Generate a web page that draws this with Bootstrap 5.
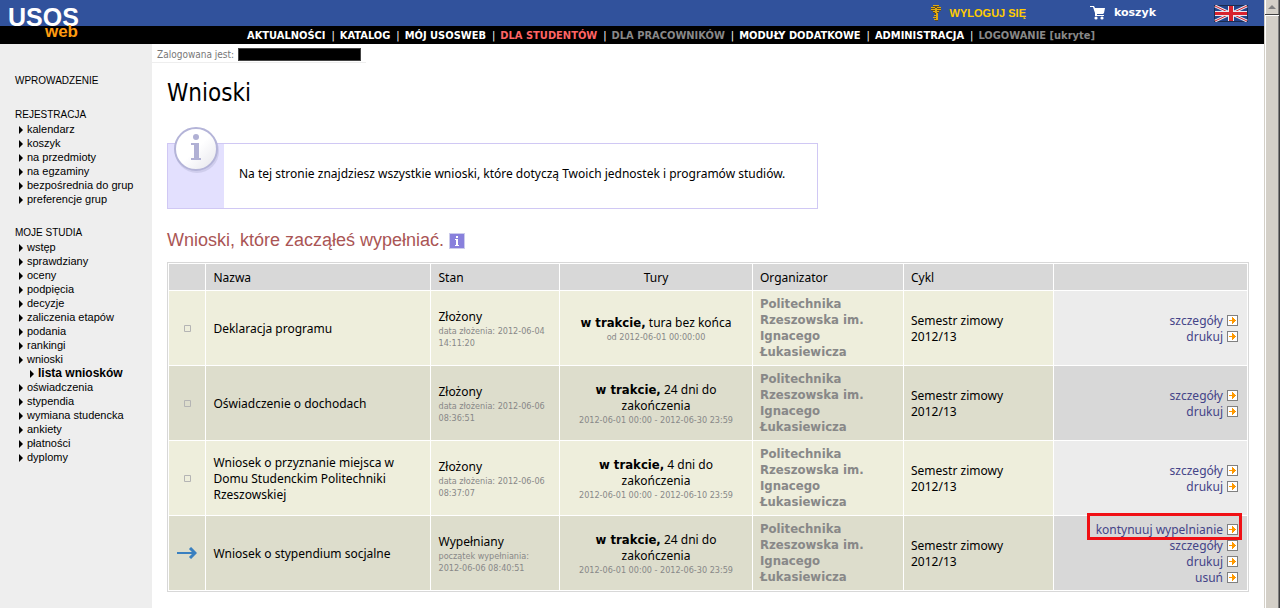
<!DOCTYPE html>
<html lang="pl">
<head>
<meta charset="utf-8">
<meta name="viewport" content="width=device-width, initial-scale=1">
<title>USOSweb - Wnioski</title>
<link href="https://cdn.jsdelivr.net/npm/bootstrap@5.3.0/dist/css/bootstrap.min.css" rel="stylesheet">
<style>
  :root { --tahoma: "DejaVu Sans Condensed", "DejaVu Sans", Tahoma, sans-serif; --text: "Noto Sans", Tahoma, sans-serif; --arial: "Liberation Sans", Arial, sans-serif; }
  body { font: 12px/16px var(--text); color: #000; background: #fff; }
  a { text-decoration: none; color: inherit; }
  a:hover { text-decoration: underline; }
  ul { list-style: none; margin: 0; padding: 0; }

  /* header */
  .bar-top { height: 26px; background: #31529c; padding-right: 16px; font: bold 11px/14px var(--arial); color: #fff; }
  .bar-nav { height: 18px; background: #000; padding-left: 247px; color: #888; font: bold 11px/20px var(--tahoma); white-space: nowrap; }
  .bar-nav li + li::before { content: "|"; color: #fff; font-weight: normal; margin: 0 5px 0 6px; }
  .bar-nav .on { color: #fff; }
  .bar-nav .current { color: #ff6464; }
  .logo { position: absolute; left: 8px; top: 8px; width: 70px; font-family: var(--arial); font-weight: bold; }
  .logo:hover { text-decoration: none; }
  .logo-usos { display: block; color: #fff; font-size: 25px; line-height: 18px; }
  .logo-web { display: block; color: #ff9c10; font-size: 17px; line-height: 12px; text-align: right; }
  .logout { color: #fc0; margin-right: 64px; }
  .basket { font-family: "DejaVu Sans", Verdana, sans-serif; margin-right: 58px; }

  /* side menu */
  .side { width: 152px; background: #eee; padding: 30px 0 0 15px; font: 11px/14px var(--arial); }
  .side h2 { font: 10px/14px var(--arial); margin: 0; }
  .side section { margin-bottom: 20px; }
  .side li { padding-left: 4px; }
  .side li li { padding-left: 11px; font-weight: bold; font-size: 12px; }
  .side li a::before { content: ""; display: inline-block; border: solid transparent; border-width: 4px 0 4px 4px; border-left-color: #000; margin-right: 4px; vertical-align: -1px; }

  /* content */
  .who { font: 10px/14px var(--tahoma); color: #777; padding: 4px 5px 0; width: 214px; border-bottom: 1px solid #eee; }
  .who-name { width: 123px; height: 13px; background: #000; border: 1px solid #444; }
  .inner { padding: 14px 15px 16px; }
  h1 { font: 24px/32px var(--tahoma); margin: 0 0 34px; }
  .note { width: 651px; max-width: 100%; height: 66px; border: 1px solid #d0c8f4; position: relative; margin-bottom: 17px; }
  .note-side { width: 56px; background: #e3e0fe; }
  .note-icon { position: absolute; left: 4px; top: -19px; }
  .note p { margin: 0; padding: 0 15px 5px; }
  .section-title { font: 18px/28px var(--arial); color: #a55; margin: 0 0 8px; }
  .section-title svg { vertical-align: -3px; }

  /* applications table */
  .apps { width: 100%; table-layout: fixed; border: 1px solid #d8d8d8; border-collapse: separate; border-spacing: 1px; }
  .apps th, .apps td { padding: 6px 7px 4px; vertical-align: middle; }
  .apps th { background: #d8d8d8; font-weight: normal; }
  .apps td { background: #eeeedc; }
  .apps tbody tr:nth-child(even) td { background: #ddddcc; }
  .apps td.acts { background: #ececec; text-align: right; padding-right: 9px; color: #448; }
  .apps tbody tr:nth-child(even) td.acts { background: #d8d8d8; }
  .apps .minor { display: block; font: 9px/12px var(--tahoma); color: #888; }
  .apps .org { font: bold 13px/16px var(--tahoma); padding: 5px 7px; color: #888; }
  .apps b { font: bold 13px/1 var(--tahoma); }
  .apps .mid { text-align: center; }
  .apps .mid svg { display: block; margin: -2px auto 0; }
  .acts a { display: flex; justify-content: flex-end; align-items: center; gap: 4px; }
  .acts svg { margin-bottom: 2px; }
  .acts .marked { position: relative; }
  .marked::after { content: ""; position: absolute; inset: -9px -4px -2px auto; width: 155px; border: 3px solid #f00f14; }

  /* scroll bar */
  .scroller { width: 16px; background: #d4d0c8; border-left: 1px solid #d4d0c8; border-right: 1px solid #404040; box-shadow: inset 1px 0 #fff, inset -1px 0 #808080; }
  .scroller-up { height: 15px; border-bottom: 1px solid #404040; box-shadow: 0 1px #fff; }
</style>
<script src="https://cdn.jsdelivr.net/npm/bootstrap@5.3.0/dist/js/bootstrap.bundle.min.js"></script>
</head>
<body>
<svg width="0" height="0" class="position-absolute" aria-hidden="true">
  <symbol id="go" viewBox="0 0 11 11"><path fill="#808080" d="M0 0h11v11H0z"/><path fill="#fff" d="M1 1h9v9H1z"/><path fill="#f90" d="M2 5h3V2h1v1h1v1h1v1h1v1H8v1H7v1H6v1H5V6H2z"/></symbol>
</svg>
<div class="d-flex min-vh-100">
  <div class="flex-grow-1 d-flex flex-column">
    <header class="position-relative">
      <div class="bar-top d-flex align-items-center justify-content-end">
        <a class="logout d-flex align-items-center" href="#">
          <svg class="me-2" width="12" height="17" viewBox="0 0 12 17" shape-rendering="crispEdges" aria-hidden="true"><path fill="#5a4a28" d="M3 1h6v1h2v4H9v2H8v8H5v-1H4v-1h1v-1H4v-1h1V8H3V6H1V2h2z"/><path fill="#e0aa10" d="M3 0h6v1H3zM1 2h4v1H1zM7 2h4v1H7zM1 4h4v1H1zM7 4h4v1H7zM3 6h6v1H3zM5 3h2v5H5zM6 8h2v7H6zM4 10h2v1H4zM3 12h3v1H3zM4 14h3v1H4z"/></svg>
          WYLOGUJ SIĘ</a>
        <a class="basket d-flex align-items-center" href="#">
          <svg class="me-2" width="16" height="14" viewBox="0 0 16 14" aria-hidden="true"><path fill="#fff" d="M0 0h4l1 2h10l-1 5-1 1H7v1h7v1H5V7L3 1H0z"/><circle cx="6" cy="12" r="1.6" fill="#fff"/><circle cx="12" cy="12" r="1.6" fill="#fff"/></svg>
          koszyk</a>
        <a href="#" aria-label="English" class="d-flex">
          <svg width="34" height="17" viewBox="0 0 34 17" aria-hidden="true"><path fill="#1c2c50" d="M0 0h34v17H0z"/><path fill="#24448c" d="M1 1h32v15H1z"/><path stroke="#e8e8f0" stroke-width="3" d="M1 1l32 15M33 1L1 16"/><path stroke="#d8222e" stroke-width="1" d="M1 1l32 15M33 1L1 16"/><path fill="#e8e8f0" d="M14 1h6v15h-6zM1 6h32v5H1z"/><path fill="#d8222e" d="M15 1h4v15h-4zM1 7h32v3H1z"/></svg>
        </a>
      </div>
      <nav class="bar-nav">
        <ul class="d-flex">
          <li><a class="on" href="#">AKTUALNOŚCI</a></li>
          <li><a class="on" href="#">KATALOG</a></li>
          <li><a class="on" href="#">MÓJ USOSWEB</a></li>
          <li><a class="current" href="#">DLA STUDENTÓW</a></li>
          <li><a href="#">DLA PRACOWNIKÓW</a></li>
          <li><a class="on" href="#">MODUŁY DODATKOWE</a></li>
          <li><a class="on" href="#">ADMINISTRACJA</a></li>
          <li><a href="#">LOGOWANIE [ukryte]</a></li>
        </ul>
      </nav>
      <a class="logo" href="#"><span class="logo-usos">USOS</span><span class="logo-web">web</span></a>
    </header>

    <div class="flex-grow-1 d-flex">
      <aside class="side flex-shrink-0">
        <section><h2><a href="#">WPROWADZENIE</a></h2></section>
        <section>
          <h2>REJESTRACJA</h2>
          <ul>
            <li><a href="#">kalendarz</a></li>
            <li><a href="#">koszyk</a></li>
            <li><a href="#">na przedmioty</a></li>
            <li><a href="#">na egzaminy</a></li>
            <li><a href="#">bezpośrednia do grup</a></li>
            <li><a href="#">preferencje grup</a></li>
          </ul>
        </section>
        <section>
          <h2>MOJE STUDIA</h2>
          <ul>
            <li><a href="#">wstęp</a></li>
            <li><a href="#">sprawdziany</a></li>
            <li><a href="#">oceny</a></li>
            <li><a href="#">podpięcia</a></li>
            <li><a href="#">decyzje</a></li>
            <li><a href="#">zaliczenia etapów</a></li>
            <li><a href="#">podania</a></li>
            <li><a href="#">rankingi</a></li>
            <li><a href="#">wnioski</a>
              <ul><li><a href="#">lista wniosków</a></li></ul>
            </li>
            <li><a href="#">oświadczenia</a></li>
            <li><a href="#">stypendia</a></li>
            <li><a href="#">wymiana studencka</a></li>
            <li><a href="#">ankiety</a></li>
            <li><a href="#">płatności</a></li>
            <li><a href="#">dyplomy</a></li>
          </ul>
        </section>
      </aside>

      <main class="flex-grow-1">
        <div class="who d-flex justify-content-between">Zalogowana jest: <span class="who-name"></span></div>
        <div class="inner">
          <h1>Wnioski</h1>
          <div class="note d-flex">
            <div class="note-side"></div>
            <svg class="note-icon" width="50" height="50" viewBox="0 0 50 50" aria-hidden="true">
              <defs><linearGradient id="disc" x1="0" y1="0" x2="1" y2="1"><stop offset=".5" stop-color="#fff"/><stop offset="1" stop-color="#e4e4ea"/></linearGradient></defs>
              <circle cx="25" cy="26" r="22" fill="#aaaacc" opacity=".35"/>
              <circle cx="24" cy="24" r="21" fill="url(#disc)" stroke="#b4b4d8" stroke-width="2"/>
              <circle cx="24" cy="12" r="3" fill="#b0b0d4"/>
              <path fill="#b0b0d4" d="M19 18h8v15h2v2H19v-2h3V20h-3z"/>
            </svg>
            <p class="align-self-center">Na tej stronie znajdziesz wszystkie wnioski, które dotyczą Twoich jednostek i programów studiów.</p>
          </div>
          <h2 class="section-title">Wnioski, które zacząłeś wypełniać.
            <svg width="16" height="16" viewBox="0 0 16 16" aria-hidden="true"><path fill="#ccccec" d="M0 0h16v16H0z"/><path fill="#8880dc" d="M1 1h14v14H1z"/><path fill="#fff" d="M7 3h2v2H7zM6 6h3v6h1v1H6v-1h1V7H6z"/></svg>
          </h2>
          <table class="apps">
            <colgroup><col style="width:3.4%"><col style="width:20.9%"><col style="width:11.9%"><col style="width:17.9%"><col style="width:14%"><col style="width:13.9%"><col></colgroup>
            <thead><tr><th></th><th>Nazwa</th><th>Stan</th><th class="mid">Tury</th><th>Organizator</th><th>Cykl</th><th></th></tr></thead>
            <tbody>
              <tr>
                <td class="mid"><svg width="7" height="7" viewBox="0 0 7 7"><path fill="none" stroke="#b4b4b4" d="M.5.5h6v6h-6z"/></svg></td>
                <td>Deklaracja programu</td>
                <td>Złożony<span class="minor">data złożenia: 2012-06-04 14:11:20</span></td>
                <td class="mid"><b>w trakcie,</b> tura bez końca<span class="minor">od 2012-06-01 00:00:00</span></td>
                <td class="org">Politechnika Rzeszowska im. Ignacego Łukasiewicza</td>
                <td>Semestr zimowy 2012/13</td>
                <td class="acts">
                  <a href="#">szczegóły <svg width="11" height="11"><use href="#go"/></svg></a>
                  <a href="#">drukuj <svg width="11" height="11"><use href="#go"/></svg></a>
                </td>
              </tr>
              <tr>
                <td class="mid"><svg width="7" height="7" viewBox="0 0 7 7"><path fill="none" stroke="#b4b4b4" d="M.5.5h6v6h-6z"/></svg></td>
                <td>Oświadczenie o dochodach</td>
                <td>Złożony<span class="minor">data złożenia: 2012-06-06 08:36:51</span></td>
                <td class="mid"><b>w trakcie,</b> 24 dni do<br>zakończenia<span class="minor">2012-06-01 00:00 - 2012-06-30 23:59</span></td>
                <td class="org">Politechnika Rzeszowska im. Ignacego Łukasiewicza</td>
                <td>Semestr zimowy 2012/13</td>
                <td class="acts">
                  <a href="#">szczegóły <svg width="11" height="11"><use href="#go"/></svg></a>
                  <a href="#">drukuj <svg width="11" height="11"><use href="#go"/></svg></a>
                </td>
              </tr>
              <tr>
                <td class="mid"><svg width="7" height="7" viewBox="0 0 7 7"><path fill="none" stroke="#b4b4b4" d="M.5.5h6v6h-6z"/></svg></td>
                <td>Wniosek o przyznanie miejsca w Domu Studenckim Politechniki Rzeszowskiej</td>
                <td>Złożony<span class="minor">data złożenia: 2012-06-06 08:37:07</span></td>
                <td class="mid"><b>w trakcie,</b> 4 dni do<br>zakończenia<span class="minor">2012-06-01 00:00 - 2012-06-10 23:59</span></td>
                <td class="org">Politechnika Rzeszowska im. Ignacego Łukasiewicza</td>
                <td>Semestr zimowy 2012/13</td>
                <td class="acts">
                  <a href="#">szczegóły <svg width="11" height="11"><use href="#go"/></svg></a>
                  <a href="#">drukuj <svg width="11" height="11"><use href="#go"/></svg></a>
                </td>
              </tr>
              <tr>
                <td class="mid"><svg width="20" height="12" viewBox="0 0 20 12"><path fill="none" stroke="#3a80c0" stroke-width="2" d="M0 6h18"/><path fill="none" stroke="#3a80c0" stroke-width="3" d="M13 1l5 5-5 5"/></svg></td>
                <td>Wniosek o stypendium socjalne</td>
                <td>Wypełniany<span class="minor">początek wypełniania: 2012-06-06 08:40:51</span></td>
                <td class="mid"><b>w trakcie,</b> 24 dni do<br>zakończenia<span class="minor">2012-06-01 00:00 - 2012-06-30 23:59</span></td>
                <td class="org">Politechnika Rzeszowska im. Ignacego Łukasiewicza</td>
                <td>Semestr zimowy 2012/13</td>
                <td class="acts">
                  <a class="marked" href="#">kontynuuj wypelnianie <svg width="11" height="11"><use href="#go"/></svg></a>
                  <a href="#">szczegóły <svg width="11" height="11"><use href="#go"/></svg></a>
                  <a href="#">drukuj <svg width="11" height="11"><use href="#go"/></svg></a>
                  <a href="#">usuń <svg width="11" height="11"><use href="#go"/></svg></a>
                </td>
              </tr>
            </tbody>
          </table>
        </div>
      </main>
    </div>
  </div>
  <div class="scroller flex-shrink-0" aria-hidden="true"><div class="scroller-up d-flex justify-content-center align-items-center"><svg width="8" height="4" viewBox="0 0 8 4"><path fill="#808080" d="M4 0l4 4H0z"/></svg></div></div>
</div>
</body>
</html>
